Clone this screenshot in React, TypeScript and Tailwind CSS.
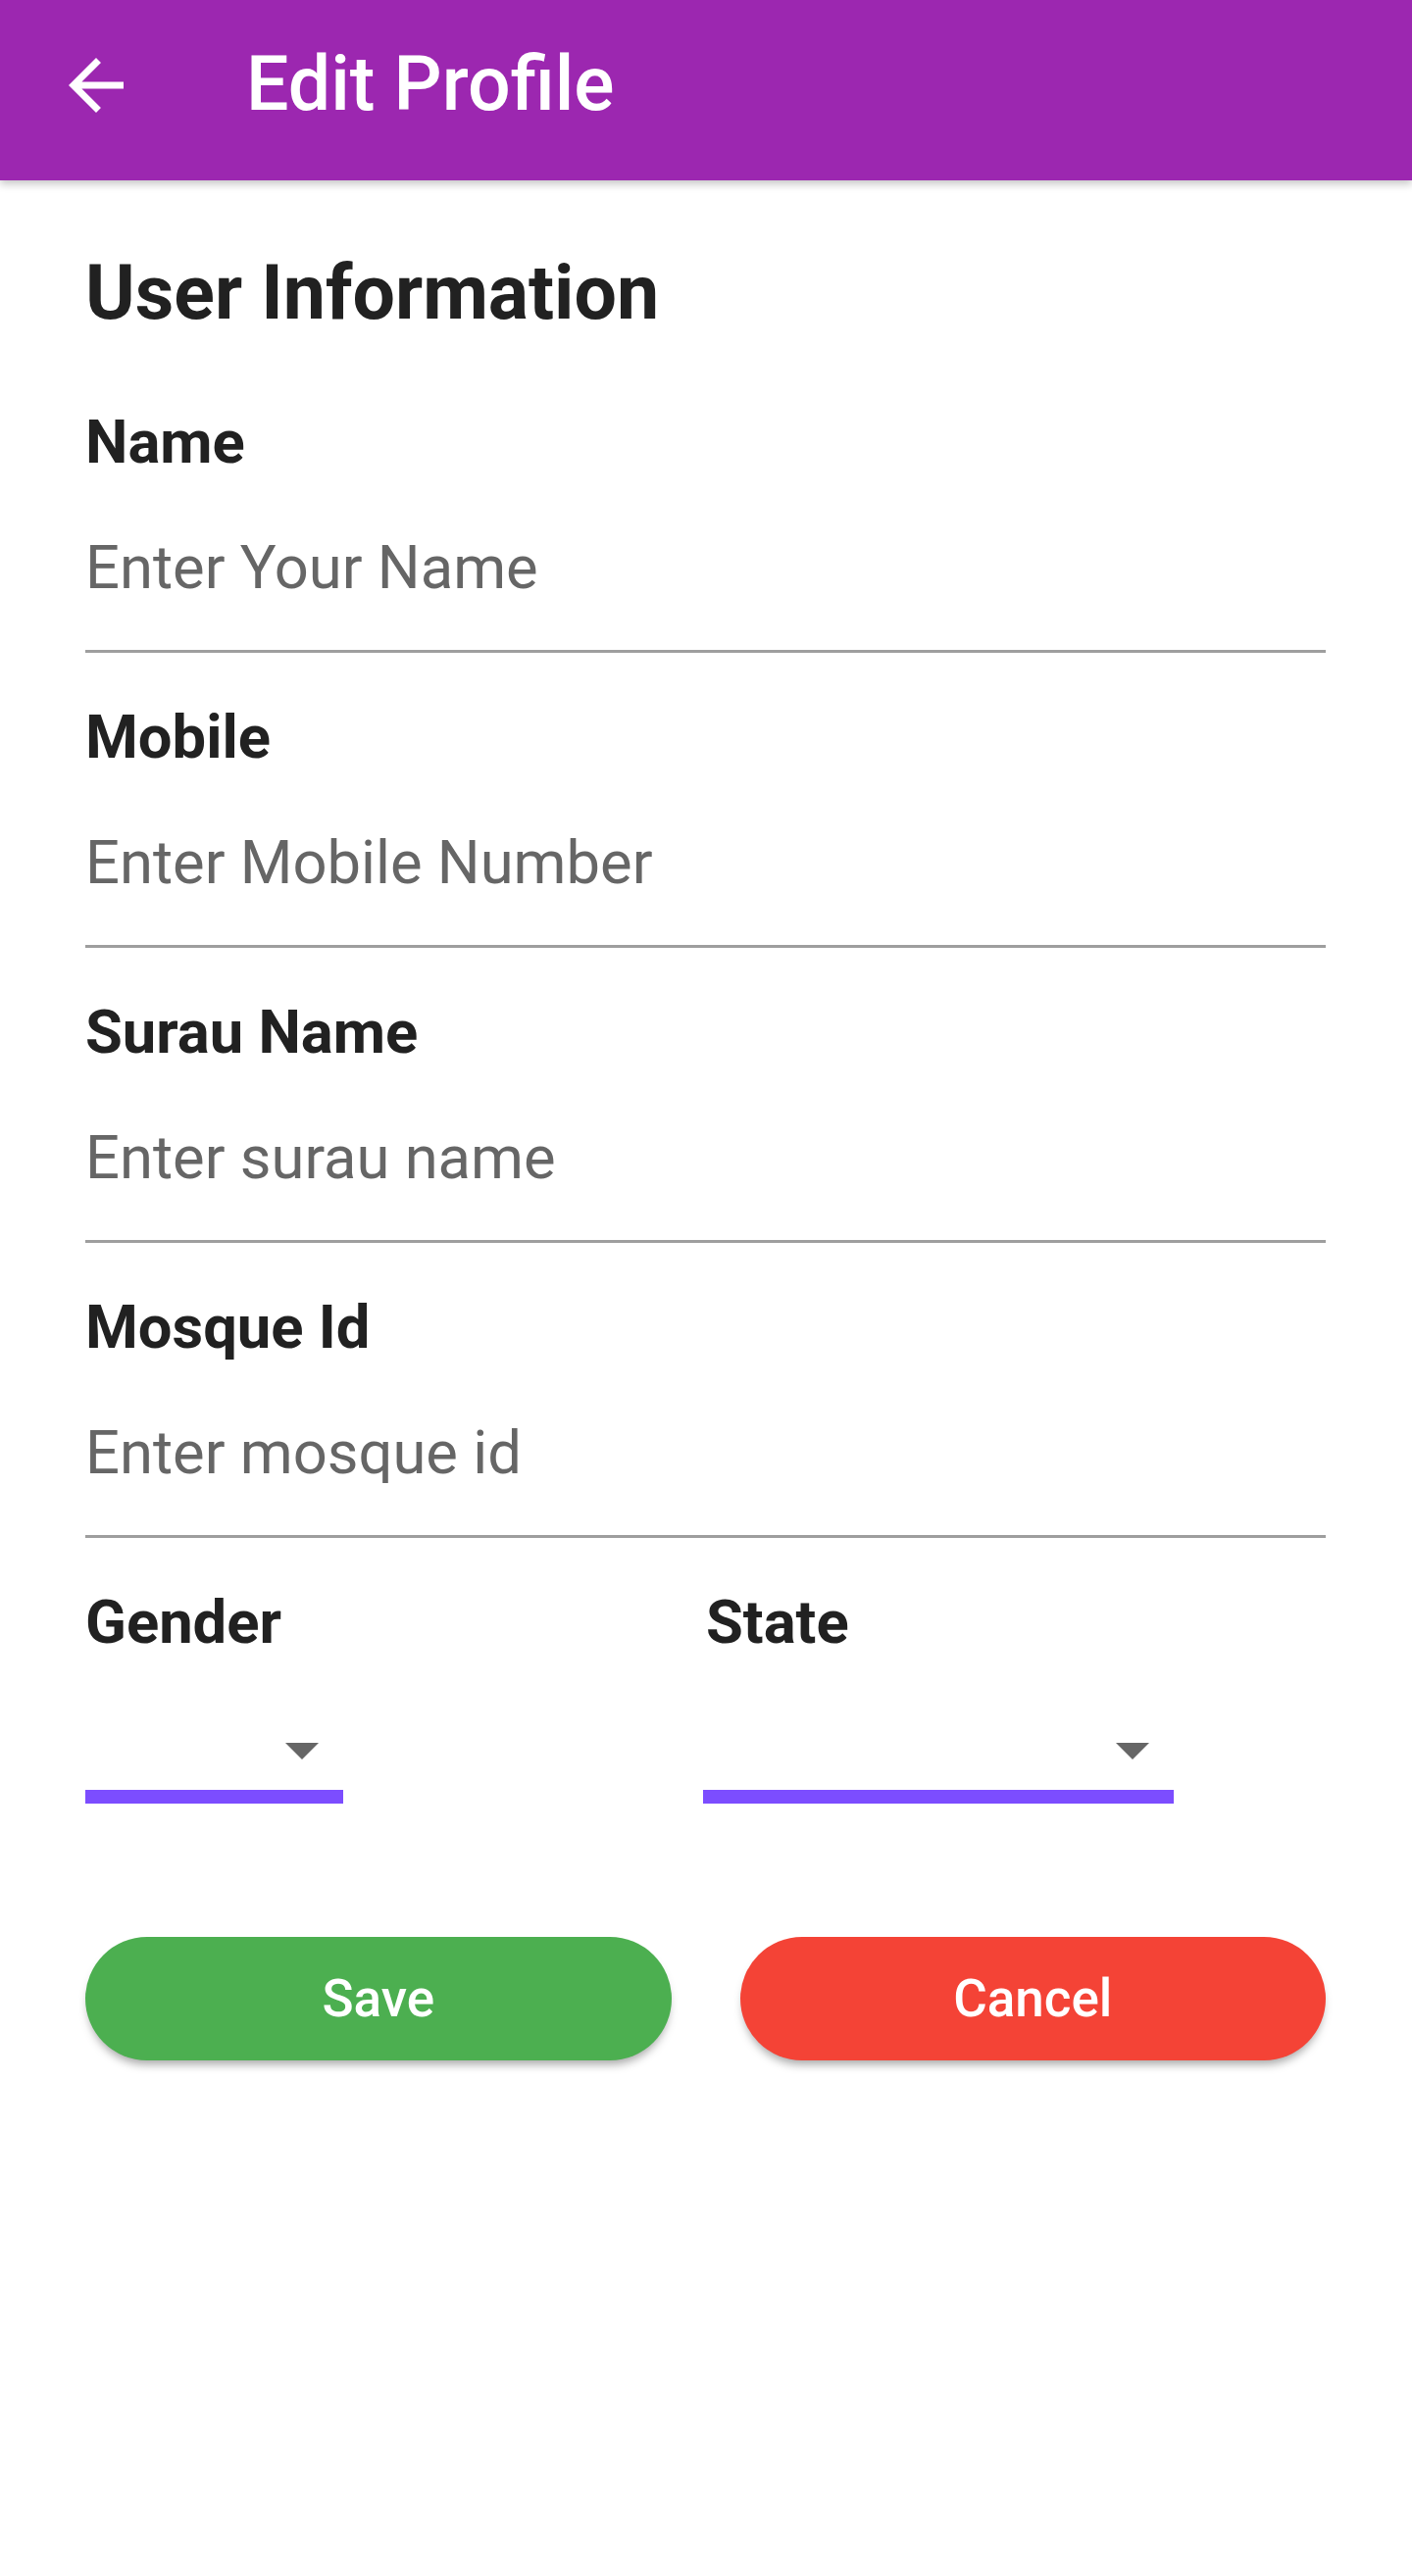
import { useState } from 'react';

const fields = [
  { id: 'name', label: 'Name', placeholder: 'Enter Your Name' },
  { id: 'mobile', label: 'Mobile', placeholder: 'Enter Mobile Number' },
  { id: 'surau', label: 'Surau Name', placeholder: 'Enter surau name' },
  { id: 'mosque', label: 'Mosque Id', placeholder: 'Enter mosque id' },
];

function BackArrow() {
  return (
    <svg viewBox="0 0 24 24" className="h-[84px] w-[84px]" fill="#ffffff">
      <path d="M20 11H7.83l5.59-5.59L12 4l-8 8 8 8 1.41-1.41L7.83 13H20v-2z" />
    </svg>
  );
}

function Spinner({ width }: { width: string }) {
  return (
    <div className={`flex flex-col ${width}`}>
      <div className="flex justify-end pr-[25px] pt-[92px]">
        <svg viewBox="0 0 34 17" className="h-[17px] w-[34px]">
          <polygon points="0,0 34,0 17,17" fill="#666666" />
        </svg>
      </div>
      <div className="mt-[31px] h-[14px] bg-[#7c4dff]" />
    </div>
  );
}

export default function App() {
  const [values, setValues] = useState<Record<string, string>>({});

  return (
    <div className="min-h-[2628px] bg-white font-['Roboto',sans-serif] text-[#212121]">
      <header className="relative z-10 flex h-[184px] items-start bg-[#9c27b0] shadow-[0_4px_8px_rgba(0,0,0,0.22)]">
        <button className="ml-[56px] mt-[45px]" aria-label="Back">
          <BackArrow />
        </button>
        <h1 className="ml-[111px] mt-[48px] text-[77px] font-medium leading-none text-white">
          Edit Profile
        </h1>
      </header>

      <main className="pl-[87px] pr-[88px] pt-[77px]">
        <h2 className="text-[77px] font-bold leading-none">User Information</h2>

        <div className="mt-[83px] flex flex-col">
          {fields.map((f) => (
            <div key={f.id} className="mb-[56px] flex flex-col">
              <label htmlFor={f.id} className="h-[61px] text-[61.5px] font-bold leading-[61px]">
                {f.label}
              </label>
              <input
                id={f.id}
                value={values[f.id] ?? ''}
                onChange={(e) => setValues({ ...values, [f.id]: e.target.value })}
                placeholder={f.placeholder}
                className="mt-[66px] h-[62px] w-full bg-transparent p-0 text-[61.5px] leading-[62px] text-[#212121] outline-none placeholder:text-[#666666]"
              />
              <div className="mt-[53px] h-[3px] bg-[#9e9e9e]" />
            </div>
          ))}
        </div>

        <div className="flex">
          <div className="flex w-[630px] flex-col">
            <span className="h-[61px] text-[61.5px] font-bold leading-[61px]">Gender</span>
            <Spinner width="w-[263px]" />
          </div>
          <div className="flex flex-col">
            <span className="ml-[3px] h-[61px] text-[61.5px] font-bold leading-[61px]">State</span>
            <Spinner width="w-[480px]" />
          </div>
        </div>

        <div className="mt-[136px] flex gap-[70px]">
          <button className="flex h-[126px] flex-1 items-center justify-center rounded-full bg-[#4caf50] text-[53px] font-medium leading-none text-white shadow-[0_7px_10px_-3px_rgba(0,0,0,0.35)]">
            Save
          </button>
          <button className="flex h-[126px] flex-1 items-center justify-center rounded-full bg-[#f44336] text-[53px] font-medium leading-none text-white shadow-[0_7px_10px_-3px_rgba(0,0,0,0.35)]">
            Cancel
          </button>
        </div>
      </main>
    </div>
  );
}
